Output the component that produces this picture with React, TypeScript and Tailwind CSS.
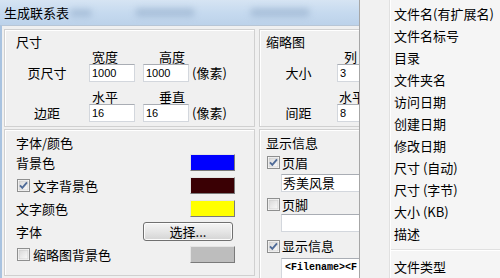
import React from "react"

const cjk = "font-['Noto_Sans_CJK_SC','Liberation_Sans',sans-serif]"

function CheckBox({ checked }: { checked?: boolean }) {
  return (
    <svg width="13" height="13" viewBox="0 0 13 13" className="shrink-0">
      <defs>
        <linearGradient id={checked ? "cbOn" : "cbOff"} x1="0" y1="0" x2="1" y2="1">
          <stop offset="0" stopColor="#d8d8d8" />
          <stop offset="1" stopColor="#fbfbfb" />
        </linearGradient>
      </defs>
      <rect x="0.5" y="0.5" width="12" height="12" fill="#fff" stroke="#8e8f8f" />
      <rect x="2" y="2" width="9" height="9" fill={`url(#${checked ? "cbOn" : "cbOff"})`} stroke="#c4c4c4" strokeWidth="0.6" />
      {checked && (
        <path d="M3 6.4 L5.3 8.8 L10 3.4" fill="none" stroke="#4f6b98" strokeWidth="1.9" />
      )}
    </svg>
  )
}

function Field({ value, className = "" }: { value?: string; className?: string }) {
  return (
    <div
      className={`h-[18px] shrink-0 overflow-hidden whitespace-nowrap border border-[#d3d7dd] border-t-[#a9adb4] bg-white pl-[2px] font-['Liberation_Sans',sans-serif] text-[11px] leading-[16px] text-black ${className}`}
    >
      {value}
    </div>
  )
}

function Swatch({ color }: { color: string }) {
  return (
    <div
      className="h-[17px] w-[45px] border border-[#e4e4e4] border-b-[#7a7a7a] border-r-[#7a7a7a]"
      style={{ backgroundColor: color }}
    />
  )
}

function Panel({ children, className = "" }: { children: React.ReactNode; className?: string }) {
  return (
    <div
      className={`flex flex-col border border-[#d0d0d0] shadow-[inset_1px_1px_0_#ffffff] ${className}`}
    >
      {children}
    </div>
  )
}

const menuItems = [
  "文件名(有扩展名)",
  "文件名标号",
  "目录",
  "文件夹名",
  "访问日期",
  "创建日期",
  "修改日期",
  "尺寸 (自动)",
  "尺寸 (字节)",
  "大小 (KB)",
  "描述",
]

export default function App() {
  return (
    <div className={`flex h-[278px] w-[500px] overflow-hidden bg-[#f0f0f0] text-[13px] text-black ${cjk}`}>
      {/* Dialog */}
      <div className="flex h-full w-[360px] shrink-0 flex-col overflow-hidden border-r border-[#a6a6a6]">
        {/* Title bar */}
        <div className="relative flex h-[25px] shrink-0 items-center overflow-hidden bg-gradient-to-b from-[#d6e4f3] via-[#c6daef] to-[#bcd2ea] pl-[4px]">
          <span className="relative z-10 leading-[25px]">生成联系表</span>
          <div className="absolute left-[70px] top-[9px] h-[8px] w-[22px] rounded-full bg-[#8ea8c6] opacity-50 blur-[3px]" />
          <div className="absolute left-[135px] top-[8px] h-[9px] w-[60px] rounded-full bg-[#8ea8c6] opacity-50 blur-[3px]" />
          <div className="absolute left-[250px] top-[8px] h-[9px] w-[60px] rounded-full bg-[#8ea8c6] opacity-50 blur-[3px]" />
        </div>

        {/* Body */}
        <div className="flex flex-1 gap-[4px] border-l-2 border-t border-l-[#a9c3e0] border-t-[#b8c6d6] pl-[2px] pt-[3px]">
          {/* Left column */}
          <div className="flex w-[251px] shrink-0 flex-col gap-[2px]">
            <Panel className="h-[98px]">
              <div className="pl-[11px] pt-[4px] leading-[16px]">尺寸</div>
              <div className="flex h-[14px] leading-[14px]">
                <div className="w-[84px]" />
                <div className="w-[46px] pl-[3px]">宽度</div>
                <div className="w-[8px]" />
                <div className="w-[46px] pl-[16px]">高度</div>
              </div>
              <div className="flex h-[18px] items-center">
                <div className="w-[84px] text-center">页尺寸</div>
                <Field value="1000" className="w-[46px]" />
                <div className="w-[8px]" />
                <Field value="1000" className="w-[46px]" />
                <span className="ml-[3px]">(像素)</span>
              </div>
              <div className="flex h-[22px] pt-[8px] leading-[14px]">
                <div className="w-[84px]" />
                <div className="w-[46px] pl-[3px]">水平</div>
                <div className="w-[8px]" />
                <div className="w-[46px] pl-[16px]">垂直</div>
              </div>
              <div className="flex h-[18px] items-center">
                <div className="w-[84px] text-center">边距</div>
                <Field value="16" className="w-[46px]" />
                <div className="w-[8px]" />
                <Field value="16" className="w-[46px]" />
                <span className="ml-[3px]">(像素)</span>
              </div>
            </Panel>

            <Panel className="h-[147px]">
              <div className="pl-[11px] pt-[5px] leading-[16px]">字体/颜色</div>
              <div className="flex h-[23px] items-center justify-between pl-[11px] pr-[19px]">
                <span>背景色</span>
                <Swatch color="#0000ff" />
              </div>
              <div className="flex h-[23px] items-center justify-between pl-[12px] pr-[19px]">
                <span className="flex items-center gap-[3px]">
                  <CheckBox checked />
                  文字背景色
                </span>
                <Swatch color="#3a0004" />
              </div>
              <div className="flex h-[23px] items-center justify-between pl-[11px] pr-[19px]">
                <span>文字颜色</span>
                <Swatch color="#ffff00" />
              </div>
              <div className="flex h-[23px] items-center justify-between pl-[11px] pr-[21px]">
                <span>字体</span>
                <button className="h-[19px] w-[90px] rounded-[3px] border border-[#707070] bg-gradient-to-b from-[#f4f4f4] via-[#e6e6e6] to-[#d4d4d4] text-[13px] leading-[16px] shadow-[inset_0_0_0_1px_#fcfcfc]">
                  选择...
                </button>
              </div>
              <div className="flex h-[23px] items-center justify-between pl-[12px] pr-[19px]">
                <span className="flex items-center gap-[3px]">
                  <CheckBox />
                  缩略图背景色
                </span>
                <Swatch color="#bdbdbd" />
              </div>
            </Panel>
          </div>

          {/* Right column */}
          <div className="flex w-[100px] shrink-0 flex-col gap-[2px]">
            <Panel className="h-[98px] border-r-0">
              <div className="pl-[6px] pt-[4px] leading-[16px]">缩略图</div>
              <div className="flex h-[14px] leading-[14px]">
                <div className="w-[77px] shrink-0" />
                <div className="pl-[7px]">列</div>
              </div>
              <div className="flex h-[18px] items-center">
                <div className="w-[77px] shrink-0 text-center">大小</div>
                <Field value="3" className="w-[40px]" />
              </div>
              <div className="flex h-[22px] whitespace-nowrap pt-[8px] leading-[14px]">
                <div className="w-[77px] shrink-0" />
                <div className="pl-[2px]">水平</div>
              </div>
              <div className="flex h-[18px] items-center">
                <div className="w-[77px] shrink-0 text-center">间距</div>
                <Field value="8" className="w-[40px]" />
              </div>
            </Panel>

            <Panel className="flex-1 border-b-0 border-r-0">
              <div className="pl-[6px] pt-[5px] leading-[16px]">显示信息</div>
              <div className="flex h-[23px] items-center gap-[2px] pl-[7px]">
                <CheckBox checked />
                <span>页眉</span>
              </div>
              <div className="ml-[21px] h-[18px] w-[90px] whitespace-nowrap border border-[#d3d7dd] border-t-[#a9adb4] bg-white pl-[1px] leading-[16px]">
                秀美风景
              </div>
              <div className="flex h-[22px] items-center gap-[2px] pl-[7px] pt-[3px]">
                <CheckBox />
                <span>页脚</span>
              </div>
              <Field className="ml-[21px] w-[90px]" />
              <div className="flex h-[26px] items-center gap-[2px] pl-[7px] pt-[2px]">
                <CheckBox checked />
                <span>显示信息</span>
              </div>
              <div className="ml-[21px] h-[22px] w-[90px] whitespace-nowrap border border-[#d3d7dd] border-t-[#a9adb4] bg-white pl-[3px] font-['Liberation_Mono',monospace] text-[10px] font-bold leading-[18px]">
                {"<Filename><F"}
              </div>
            </Panel>
          </div>
        </div>
      </div>

      {/* Context menu */}
      <div className="flex h-full flex-1">
        <div className="h-full w-[30px] shrink-0 border-r border-[#e0e0e0] bg-[#f1f1f1]" />
        <div className="flex h-full flex-1 flex-col border-l border-white bg-[#f5f5f5] pt-[3px]">
          {menuItems.map((item) => (
            <div key={item} className="flex h-[22.6px] items-center whitespace-nowrap pl-[3px]">
              {item}
            </div>
          ))}
          <div className="flex h-[12px] flex-col justify-center">
            <div className="h-px bg-[#e0e0e0]" />
            <div className="h-px bg-white" />
          </div>
          <div className="flex h-[22.6px] items-center whitespace-nowrap pl-[3px]">文件类型</div>
        </div>
      </div>
    </div>
  )
}
